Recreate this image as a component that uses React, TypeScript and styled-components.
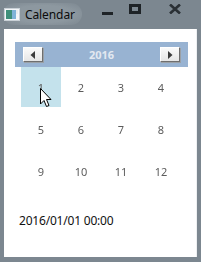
import React from 'react';
import styled, { createGlobalStyle } from 'styled-components';

const GlobalStyle = createGlobalStyle`
  html, body {
    margin: 0;
    padding: 0;
    background: #7c8790;
  }
`;

const Window = styled.div`
  width: 201px;
  height: 262px;
  display: flex;
  flex-direction: column;
  background: #7c8790;
  font-family: 'Noto Sans', 'Liberation Sans', sans-serif;
  overflow: hidden;
`;

const TitleBar = styled.div`
  height: 29px;
  display: flex;
  align-items: flex-start;
`;

const TitleGroup = styled.div`
  display: flex;
  align-items: center;
  gap: 5px;
  height: 22px;
  margin: 3px 0 0 3px;
  padding: 0 7px 0 1px;
  border-radius: 11px;
  background: radial-gradient(ellipse at center, #8d98a0 55%, rgba(141, 152, 160, 0) 100%);
`;

const Title = styled.span`
  font-size: 12px;
  color: #0c0c0c;
  letter-spacing: -0.1px;
`;

const Controls = styled.div`
  margin-left: auto;
  display: flex;
  align-items: flex-start;
`;

const ControlButton = styled.div<{ $w: number }>`
  width: ${(p) => p.$w}px;
  flex-shrink: 0;
  height: 20px;
  box-sizing: border-box;
  padding-top: 4px;
  display: flex;
  align-items: flex-start;
  justify-content: center;
`;

const MinimizeBar = styled.span`
  display: block;
  width: 11px;
  height: 3px;
  margin-top: 8px;
  background: #1e2327;
`;

const MaximizeBox = styled.span`
  display: block;
  width: 12px;
  height: 10px;
  box-sizing: border-box;
  border: 3px solid #1e2327;
`;

const Client = styled.div`
  flex: 1;
  margin: 0 4px 5px 4px;
  background: #ffffff;
  display: flex;
  flex-direction: column;
  box-shadow: inset -1px 0 0 #eef0f2;
`;

const Calendar = styled.div`
  margin: 13px 0 0 11px;
  width: 173px;
`;

const Header = styled.div`
  height: 25px;
  background: #98b3d2;
  display: flex;
  align-items: center;
  justify-content: space-between;
  padding: 0 8px;
`;

const NavButton = styled.div`
  width: 20px;
  height: 15px;
  box-sizing: border-box;
  background: linear-gradient(#fafafa, #e6e6e6);
  border: 1px solid #ffffff;
  border-right-color: #6e6e6e;
  border-bottom-color: #6e6e6e;
  box-shadow: 1px 1px 0 #9aa0a6;
  display: flex;
  align-items: center;
  justify-content: center;
`;

const Year = styled.span`
  font-size: 11px;
  font-weight: bold;
  color: #e2e8f0;
`;

const Grid = styled.div`
  display: grid;
  grid-template-columns: repeat(4, 40px);
  grid-auto-rows: 40px;
  row-gap: 2px;
  padding-left: 6px;
  will-change: transform;
`;

const Cell = styled.div<{ $selected?: boolean }>`
  display: flex;
  align-items: center;
  justify-content: center;
  font-size: 11px;
  color: #5c5c5c;
  background: ${(p) => (p.$selected ? '#c4e2ec' : 'transparent')};
  position: relative;
`;

const Cursor = styled.svg`
  position: absolute;
  left: 19px;
  top: 21px;
`;

const DateText = styled.div`
  margin: 22px 0 0 15px;
  font-size: 12px;
  line-height: 16px;
  color: #111111;
  letter-spacing: -0.2px;
`;

const months = Array.from({ length: 12 }, (_, i) => i + 1);

export default function App() {
  return (
    <>
      <GlobalStyle />
      <Window>
        <TitleBar>
          <TitleGroup>
            <svg width="16" height="13" viewBox="0 0 16 13">
              <rect x="0.5" y="0.5" width="15" height="12" fill="#f4f6f8" stroke="#c9d0d6" />
              <rect x="2" y="2" width="6" height="9" fill="#3f8f7a" />
              <rect x="8" y="2" width="4" height="9" fill="#7fb3d8" />
              <rect x="12" y="2" width="2" height="4" fill="#e8ecef" />
            </svg>
            <Title>Calendar</Title>
          </TitleGroup>
          <Controls>
            <ControlButton $w={27}>
              <MinimizeBar />
            </ControlButton>
            <ControlButton $w={28}>
              <MaximizeBox />
            </ControlButton>
            <ControlButton $w={52}>
              <svg width="12" height="10" viewBox="0 0 12 10">
                <path d="M1 0.5 L11 9.5 M11 0.5 L1 9.5" stroke="#2a3035" strokeWidth="2.6" />
              </svg>
            </ControlButton>
          </Controls>
        </TitleBar>
        <Client>
          <Calendar>
            <Header>
              <NavButton>
                <svg width="6" height="8" viewBox="0 0 6 8">
                  <path d="M5 0 L0.5 4 L5 8 Z" fill="#3c3c3c" />
                </svg>
              </NavButton>
              <Year>2016</Year>
              <NavButton>
                <svg width="6" height="8" viewBox="0 0 6 8">
                  <path d="M1 0 L5.5 4 L1 8 Z" fill="#3c3c3c" />
                </svg>
              </NavButton>
            </Header>
            <Grid>
              {months.map((m) => (
                <Cell key={m} $selected={m === 1}>
                  {m}
                  {m === 1 && (
                    <Cursor width="12" height="19" viewBox="0 0 12 19">
                      <path
                        d="M0.5 0.5 L0.5 16 L4 12.5 L6.5 18.5 L9 17.5 L6.5 11.5 L11 11.5 Z"
                        fill="#ffffff"
                        stroke="#000000"
                        strokeWidth="1"
                      />
                    </Cursor>
                  )}
                </Cell>
              ))}
            </Grid>
          </Calendar>
          <DateText>2016/01/01 00:00</DateText>
        </Client>
      </Window>
    </>
  );
}
